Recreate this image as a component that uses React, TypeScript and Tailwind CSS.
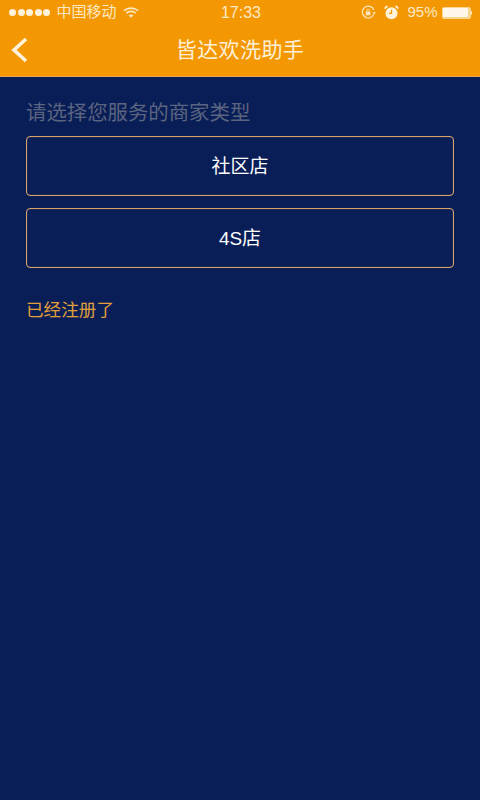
const font = "font-['Helvetica','Liberation_Sans','Noto_Sans_CJK_SC',sans-serif]";

function Signal() {
  return (
    <div className="flex gap-[1.6px]">
      {[0, 1, 2, 3, 4].map((i) => (
        <span key={i} className="w-[7px] h-[7px] rounded-full bg-[#fff3dc]" />
      ))}
    </div>
  );
}

function Wifi() {
  return (
    <svg width="16" height="11" viewBox="0 0 16 11" fill="none" stroke="#fde9c4" strokeWidth="1.8" className="ml-[7px]">
      <path d="M1 3.6C5 0.2 11 0.2 15 3.6" />
      <path d="M3.4 6C6 3.9 10 3.9 12.6 6" />
      <path d="M8 10.8L5.6 8.2C7 7.1 9 7.1 10.4 8.2Z" fill="#fde9c4" stroke="none" />
    </svg>
  );
}

function RotationLock() {
  return (
    <svg width="15" height="15" viewBox="0 0 15 15" fill="none">
      <path d="M12.6 9.6A5.9 5.9 0 1 1 12.8 5" stroke="#fde9c4" strokeWidth="1.2" />
      <path d="M11.5 7.2L15 7.2L13.2 9.4Z" fill="#fde9c4" />
      <rect x="4.8" y="6.6" width="4.6" height="3.6" rx="0.5" fill="#fde9c4" />
      <path d="M5.8 6.6V5.6A1.3 1.3 0 0 1 8.4 5.6V6.6" stroke="#fde9c4" strokeWidth="0.9" />
    </svg>
  );
}

function Alarm() {
  return (
    <svg width="15" height="15" viewBox="0 0 14 14" fill="none">
      <circle cx="7" cy="7.6" r="5.6" fill="#fff3dc" />
      <path d="M7 4.4V7.8H4.6" stroke="#f39803" strokeWidth="1.1" />
      <path d="M0.6 3.4L3.2 0.9M13.4 3.4L10.8 0.9" stroke="#fff3dc" strokeWidth="1.6" />
    </svg>
  );
}

function Battery() {
  return (
    <div className="flex items-center ml-[4px]">
      <div className="w-[29px] h-[12px] rounded-[2px] border border-[#fbd690] bg-[#fbd690] p-[0.5px]">
        <div className="h-full w-[96%] bg-[#fff8ea] rounded-[1px]" />
      </div>
      <div className="w-[1.5px] h-[4px] bg-[#fde9c4] rounded-r-sm" />
    </div>
  );
}

function StoreButton({ label }: { label: string }) {
  return (
    <button className="h-[60px] w-full rounded-[4px] border border-[#d8a268] shadow-[inset_0_0_1px_#a8825e] text-white text-[19px] pt-[3px]">
      {label}
    </button>
  );
}

export default function App() {
  return (
    <div className={`w-[480px] h-[800px] bg-[#091e56] flex flex-col ${font}`}>
      <div className="h-[77px] bg-[#f39803] border-b border-[#e8a550] shrink-0">
        <div className="relative h-[25px] flex items-center justify-between pl-[9px] pr-[8px] text-[#fde9c4] text-[15px]">
          <div className="flex items-center">
            <Signal />
            <span className="ml-[6px]">中国移动</span>
            <Wifi />
          </div>
          <span className="absolute left-[2px] right-0 text-center text-[16px]">17:33</span>
          <div className="flex items-center gap-[8px]">
            <RotationLock />
            <Alarm />
            <span className="flex items-center">
              95%
              <Battery />
            </span>
          </div>
        </div>
        <div className="relative h-[51px] flex items-center justify-center">
          <svg width="18" height="26" viewBox="0 0 18 26" fill="none" stroke="#fff3dc" strokeWidth="3.6" className="absolute left-[10px] top-[12px]">
            <path d="M16 2L4 13L16 24" />
          </svg>
          <span className="text-[#fdf0d8] text-[21px] tracking-[0.4px] -mt-[1px]">皆达欢洗助手</span>
        </div>
      </div>
      <div className="flex flex-col px-[26px] pt-[22px]">
        <p className="text-[#5b6480] text-[20.4px] leading-[26px] translate-y-[1px]">请选择您服务的商家类型</p>
        <div className="flex flex-col gap-[12px] mt-[11px]">
          <StoreButton label="社区店" />
          <StoreButton label="4S店" />
        </div>
        <p className="mt-[29px] text-[#e2a03c] text-[17.6px] leading-[26px]">已经注册了</p>
      </div>
    </div>
  );
}
